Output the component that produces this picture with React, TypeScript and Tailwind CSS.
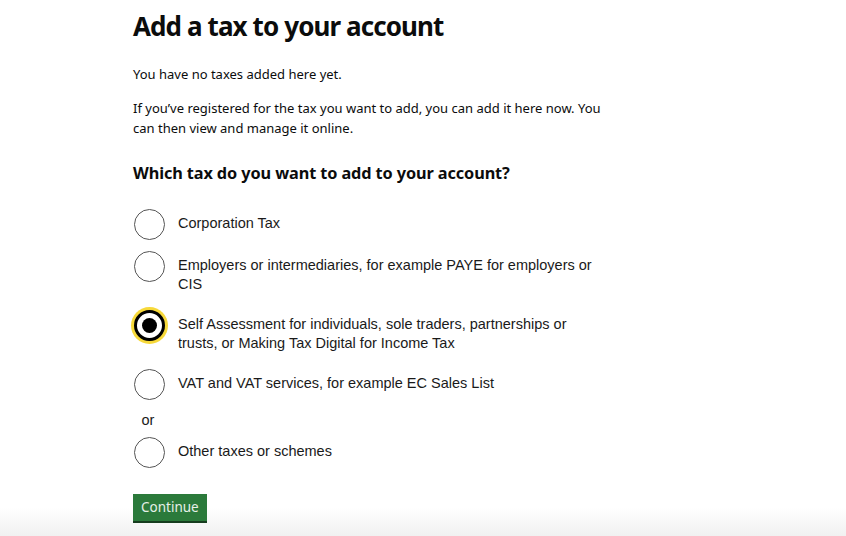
import { useState } from 'react';

const options = [
  { id: 'ct', label: 'Corporation Tax' },
  { id: 'paye', label: 'Employers or intermediaries, for example PAYE for employers or CIS' },
  { id: 'sa', label: 'Self Assessment for individuals, sole traders, partnerships or trusts, or Making Tax Digital for Income Tax' },
  { id: 'vat', label: 'VAT and VAT services, for example EC Sales List' },
];

const arial = { fontFamily: '"Liberation Sans", Arial, sans-serif' };

function Radio({ checked, label, onSelect }: { checked: boolean; label: string; onSelect: () => void }) {
  return (
    <label className="flex items-start gap-[13px] cursor-pointer" onClick={onSelect}>
      {checked ? (
        <span className="shrink-0 w-[37px] h-[37px] -m-[3px] rounded-full bg-[#f7d93a] flex items-center justify-center">
          <span className="w-[31px] h-[31px] rounded-full border-[3px] border-black bg-white flex items-center justify-center">
            <span className="w-[15px] h-[15px] rounded-full bg-black" />
          </span>
        </span>
      ) : (
        <span className="shrink-0 w-[31px] h-[31px] rounded-full border-[1.5px] border-[#555]" />
      )}
      <span className="py-[5px] text-[14.5px] leading-[19px] text-[#1a1a1a] max-w-[420px]" style={arial}>
        {label}
      </span>
    </label>
  );
}

export default function App() {
  const [selected, setSelected] = useState('sa');

  return (
    <main
      className="h-[536px] overflow-hidden bg-[linear-gradient(to_bottom,#ffffff_0,#ffffff_508px,#f1f1f1_536px)]"
      style={{ fontFamily: '"Noto Sans", sans-serif' }}
    >
      <div className="pl-[133px] pt-[10px] text-[#0b0c0c]">
        <h1 className="text-[26px] leading-[32px] font-bold tracking-[-0.9px]">Add a tax to your account</h1>

        <p className="mt-[22px] text-[13px] leading-[20px]">You have no taxes added here yet.</p>
        <p className="mt-[14px] text-[13px] leading-[20px] max-w-[470px]">
          If you’ve registered for the tax you want to add, you can add it here now. You can then view and manage it online.
        </p>

        <h2 className="mt-[23px] text-[16.3px] leading-[24px] font-bold tracking-[-0.1px]">
          Which tax do you want to add to your account?
        </h2>

        {/* Radios */}
        <div className="mt-[24px] ml-[1px] flex flex-col gap-[11px]">
          {options.map((o) => (
            <Radio key={o.id} checked={selected === o.id} label={o.label} onSelect={() => setSelected(o.id)} />
          ))}
        </div>

        <p className="mt-[10px] w-[30px] text-center text-[14.5px] leading-[20px] text-[#1a1a1a]" style={arial}>
          or
        </p>

        <div className="mt-[7px] ml-[1px]">
          <Radio checked={selected === 'other'} label="Other taxes or schemes" onSelect={() => setSelected('other')} />
        </div>

        <button className="mt-[26px] bg-[#2b7a3b] text-[#e6f0e8] text-[13.5px] leading-[19px] px-[8px] py-[4px] shadow-[0_2px_0_#173d1f]">
          Continue
        </button>
      </div>
    </main>
  );
}
